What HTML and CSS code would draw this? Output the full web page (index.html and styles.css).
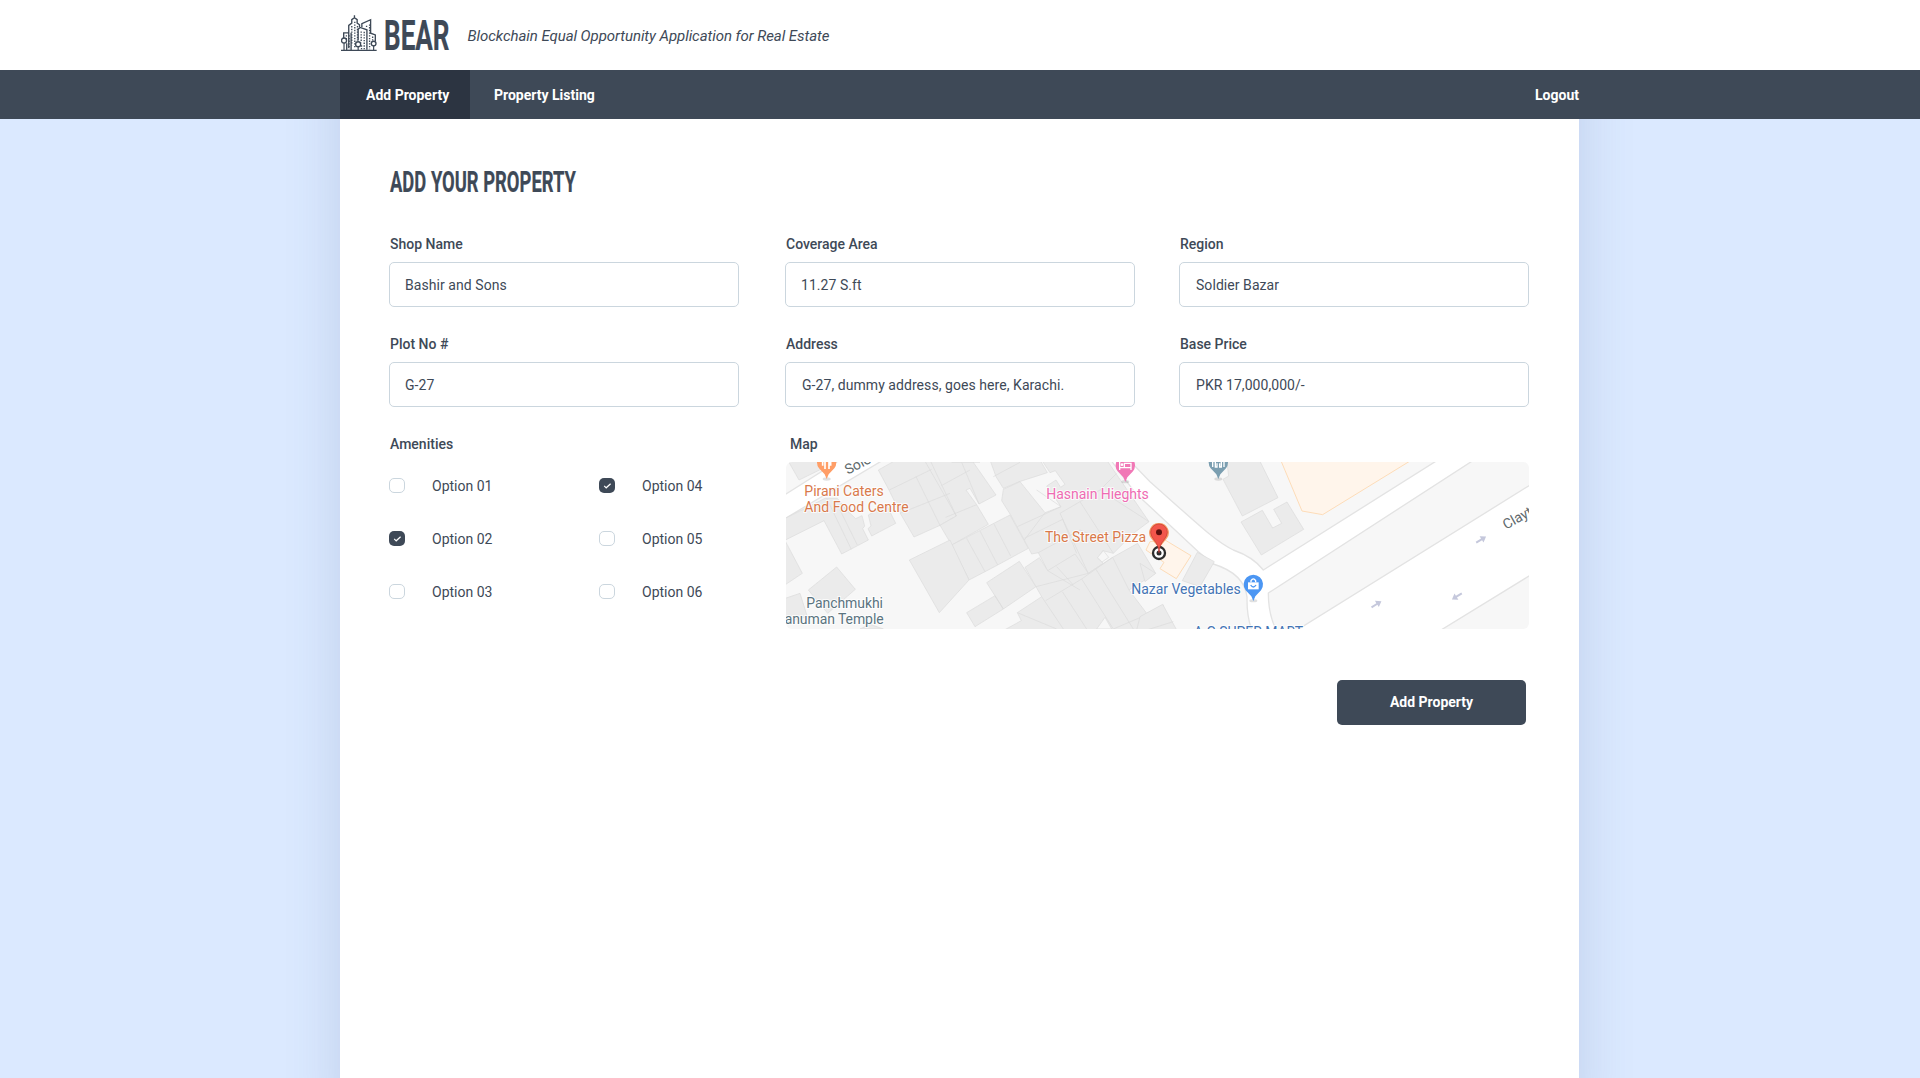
FILE: index.html
```html
<!DOCTYPE html>
<html lang="en">
<head>
<meta charset="utf-8">
<title>BEAR - Add Property</title>
<link rel="stylesheet" href="styles.css">
</head>
<body>
<header class="header">
  <div class="wrap brand">
    <svg class="brand-icon" viewBox="15 14 107 107" fill="none" stroke="#3e4957" stroke-width="4">
      <path d="M15 119H121"/>
      <path d="M24 96V119M66 107V119M112 104V119" stroke-width="3.5"/>
      <circle cx="24" cy="90" r="7.5"/><circle cx="66" cy="101" r="7.5"/><circle cx="112" cy="99" r="7"/>
      <path d="M23 82V67H40M38 112V45L47 38V28L55 22L63 28V38L70 43V50M55 22V15M66 90V56L72 51L92 58V117M77 50V40L103 28V68L117 73V91M32 98V118M45 118V67"/>
      <path d="M47 47V104M56 34V112M64 47V90" stroke-dasharray="4 4"/>
      <path d="M31 74V90M39 74V116M75 63V96M84 64V116M100 42V116M91 46V54M109 78V90M76 104V116" stroke-dasharray="4 4"/>
    </svg>
    <svg class="brand-name" viewBox="0 0 66 34" role="img"><text x="0" y="32" font-size="43.2" textLength="65.5" lengthAdjust="spacingAndGlyphs">BEAR</text></svg>
    <span class="tagline">Blockchain Equal Opportunity Application for Real Estate</span>
  </div>
</header>
<nav class="nav">
  <div class="wrap nav-row">
    <a class="nav-link active">Add Property</a>
    <a class="nav-link">Property Listing</a>
    <a class="nav-link logout">Logout</a>
  </div>
</nav>
<main class="panel">
  <h1 class="title"><svg viewBox="0 0 188 30"><text x="0" y="25" font-size="29.6" textLength="186" lengthAdjust="spacingAndGlyphs">ADD YOUR PROPERTY</text></svg></h1>
  <form class="form">
    <label class="field"><span class="label">Shop Name</span><span class="input">Bashir and Sons</span></label>
    <label class="field"><span class="label">Coverage Area</span><span class="input">11.27 S.ft</span></label>
    <label class="field"><span class="label">Region</span><span class="input wide">Soldier Bazar</span></label>
    <label class="field"><span class="label">Plot No #</span><span class="input">G-27</span></label>
    <label class="field"><span class="label">Address</span><span class="input wide">G-27, dummy address, goes here, Karachi.</span></label>
    <label class="field"><span class="label">Base Price</span><span class="input wide">PKR 17,000,000/-</span></label>
    <div class="field">
      <span class="label">Amenities</span>
      <div class="options">
        <span class="option"><i class="box"></i>Option 01</span>
        <span class="option"><i class="box checked"><svg viewBox="0 0 16 15"><path d="M5.2 7.8l2 2L11.6 5.8"/></svg></i>Option 04</span>
        <span class="option"><i class="box checked"><svg viewBox="0 0 16 15"><path d="M5.2 7.8l2 2L11.6 5.8"/></svg></i>Option 02</span>
        <span class="option"><i class="box"></i>Option 05</span>
        <span class="option"><i class="box"></i>Option 03</span>
        <span class="option"><i class="box"></i>Option 06</span>
      </div>
    </div>
    <div class="field map-field">
      <span class="label map-label">Map</span>
      <svg class="map" viewBox="0 0 2229 501">
        <rect width="2229" height="501" fill="#fff"/>
        <!-- city blocks -->
        <g fill="#f7f7f7" stroke="#e3e3e3" stroke-width="4" stroke-linejoin="round">
          <path d="M-5 -5H160L-5 99Z"/>
          <path d="M-5 171L290 -5H975L1047 92L1237 269L1282 306Q1375 335 1383 405Q1382 465 1398 506H-5Z"/>
          <path d="M1030 -5L1092 59C1240 190 1290 240 1342 264Q1402 285 1432 324L1954 -5Z"/>
          <path d="M2062 -5L1447 393Q1447 460 1472 506H1530L2234 68V-5Z"/>
          <path d="M1962 506L2234 339V506Z"/>
        </g>
        <!-- buildings, west half -->
        <g transform="translate(-18 -96)" fill="#ebebeb" stroke="#dbdbdb" stroke-width="2">
          <path d="M23 90L57 150L135 112L125 90Z"/>
          <path d="M10 268L135 205L172 205L200 240L227 266L246 257L254 288L248 296L265 330L185 372L132 272L10 333Z"/>
          <path d="M265 255L320 225L347 280L275 318L264 296L273 288Z"/>
          <path d="M10 322L67 430L10 468ZM85 480L170 411L226 478L143 550ZM10 507L60 490L82 560L10 580ZM240 597L270 583L310 597Z"/>
          <path d="M295 120L345 92H440L484 167L529 258L480 286L402 321L362 252L328 182Z"/>
          <path d="M433 90H575L648 195L597 222L570 175L558 180L590 224L625 283L515 345L480 286L529 258Z"/>
          <path d="M515 345L690 255L745 355L653 405L615 425L567 450Z"/>
          <path d="M388 390L510 330L567 450L478 548Z"/>
          <path d="M630 90H780L802 128L718 155L670 175L648 140Z"/>
          <path d="M670 178L720 155L795 248L843 230L800 168L828 150L842 172L855 163L826 122L810 128L785 90H980L1107 275L1060 310L1000 370L968 362L953 385L970 400L925 430L803 422L775 368L755 372L733 330L692 255L665 212Z"/>
          <path d="M620 458L718 394L768 470L670 537ZM560 548L645 497L670 537L585 590Z"/>
          <path d="M735 412L778 383L803 422L885 372L925 430L998 382L1073 340L1127 430L1047 480L1100 550L1150 525V610H655L724 572L712 548L785 500Z"/>
          <path d="M970 362L986 382L966 396L953 382Z" fill="#f7f7f7"/>
          <path d="M975 562L995 597H950Z" fill="#f7f7f7"/>
          <path fill="none" d="M180 240L232 345M140 205L214 358M328 180L455 118M360 250L510 190M408 140L480 286M484 167L570 120M497 262L590 224M450 90L529 258M545 97L597 222M640 140L720 97M515 97L600 97M560 325L615 425M600 303L653 405M642 282L692 378M712 290L843 230L770 180M795 248L733 330M733 325L848 268M840 250L960 180L1010 130M960 180L1107 275M840 250L925 430M900 215L1000 370M848 268L890 370M775 368L900 300L985 335M803 422L900 480M830 410L880 465M768 470L925 430M797 512L905 447L998 382M847 485L920 597M905 447L1000 597M948 418L1060 597M998 382L1047 480M785 500L850 597M712 548L830 597M1000 597L1110 550"/>
        </g>
        <!-- buildings, east half -->
        <g transform="translate(1092 -96)" fill="#ebebeb" stroke="#dbdbdb" stroke-width="2">
          <path d="M230 90H328L384 203L277 258L219 148L236 138Z"/>
          <path d="M273 276L337 241L368 294L395 280L371 238L411 216L461 298L334 375Z"/>
          <path d="M142 367L193 395L150 470L97 452Z"/>
          <path d="M-30 560L38 523L80 600H-40ZM-10 600L70 575M-30 400L17 430L-15 455Z"/>
          <g fill="#fff5eb" stroke="#fddcb8" stroke-width="3">
            <path d="M392 90L456 243L518 254L785 90Z"/>
            <path d="M45 330L123 377L79 446L30 416L42 397L-12 360L0 335Z"/>
          </g>
        </g>
        <!-- one-way arrows -->
        <g fill="#c5c8dc">
          <path transform="translate(2085 233) rotate(-32)" d="M-17 -3H2V-11L18 0L2 11V3H-17Z"/>
          <path transform="translate(1771 427) rotate(-32)" d="M-17 -3H2V-11L18 0L2 11V3H-17Z"/>
          <path transform="translate(2013 403) rotate(148)" d="M-17 -3H2V-11L18 0L2 11V3H-17Z"/>
        </g>
        <!-- place names -->
        <g class="map-text">
          <text class="food" x="55" y="102" textLength="238">Pirani Caters</text>
          <text class="food" x="55" y="150" textLength="313">And Food Centre</text>
          <text class="food" x="777" y="240" textLength="303">The Street Pizza</text>
          <text class="hotel" x="781" y="111" textLength="307">Hasnain Hieghts</text>
          <text class="shop" x="1036" y="396" textLength="328">Nazar Vegetables</text>
          <text class="shop" x="1223" y="524" textLength="328">A.G SUPER MART</text>
          <text class="temple" x="61" y="438" textLength="230">Panchmukhi</text>
          <text class="temple" x="-4" y="486" textLength="297">anuman Temple</text>
          <text class="street" transform="translate(185 38) rotate(-27)">Sole</text>
          <text class="street" transform="translate(2160 203) rotate(-29)">Clayt</text>
        </g>
        <!-- pins -->
        <g>
          <g fill="#000" opacity=".12"><ellipse cx="122" cy="51" rx="12" ry="5"/><ellipse cx="1018" cy="59" rx="12" ry="5"/><ellipse cx="1297" cy="51" rx="12" ry="5"/><ellipse cx="1402" cy="416" rx="12" ry="5"/></g>
          <g transform="translate(122 1)"><path fill="#ff9e67" d="M0 50L-6 36L-23 18A29 29 0 1 1 23 18L6 36Z"/><path d="M-12 -10V10M-5 -10V20M7 -10V20M12 -10V10" stroke="#fff" stroke-width="5" fill="none"/></g>
          <g transform="translate(1018 10)"><path fill="#f178b6" d="M0 50L-6 36L-23 18A29 29 0 1 1 23 18L6 36Z"/><path d="M-17 -14V14M-17 7H17V14M17 7V-6H-3V7" stroke="#fff" stroke-width="4" fill="none"/><circle cx="-10" cy="-2" r="4" fill="#fff"/></g>
          <g transform="translate(1297 1)"><path fill="#7b9eb0" d="M0 50L-6 36L-23 18A29 29 0 1 1 23 18L6 36Z"/><path d="M-17 -10V14M17 -10V14M-9 -10V14H-4V3M9 -10V14H4V3" stroke="#fff" stroke-width="4" fill="none"/></g>
          <g transform="translate(1402 367)"><path fill="#4b96f3" d="M0 50L-6 36L-23 18A29 29 0 1 1 23 18L6 36Z"/><path fill="#fff" d="M-16 -6H16V15H-16Z"/><path d="M-7 -6V-11Q0 -22 7 -11V-6" stroke="#fff" stroke-width="4" fill="none"/><path d="M-8 2Q0 14 8 2" stroke="#4b96f3" stroke-width="4" fill="none"/></g>
          <g transform="translate(1119 212)">
            <circle cy="61" r="18" fill="#fff" stroke="#2d2d2d" stroke-width="7"/><circle cy="61" r="7.5" fill="#2d2d2d"/>
            <path d="M0 -29A29 29 0 0 1 24 17L5 40H-5L-24 17A29 29 0 0 1 0 -29Z" fill="#f69a63"/>
            <path d="M0 60Q-1 38-14 23Q-25 9-25 -1A25 25 0 0 1 25 -1Q25 9 14 23Q1 38 0 60Z" fill="#f2564b" stroke="#c43a33" stroke-width="2"/><circle r="9" cy="-1" fill="#5c100e"/>
          </g>
        </g>
      </svg>
    </div>
  </form>
  <button class="submit">Add Property</button>
</main>
</body>
</html>
```
FILE: styles.css
```css
* { box-sizing: border-box; }

body {
  margin: 0;
  height: 1078px;
  overflow: hidden;
  background: #dbe9ff;
  color: #3e4957;
  font: 14px/20px Roboto, sans-serif;
}

.wrap { width: 1239px; margin: 0 0 0 340px; }

.header { position: relative; z-index: 1; height: 70px; background: #fff; }
.brand { display: flex; align-items: flex-start; }
.brand-icon { width: 36px; height: 36px; margin: 15px 0 0 1px; }
.brand-name { width: 66px; height: 34px; margin: 18px 0 0 7px; overflow: visible; }
.brand-name text, .title text { font-family: Roboto, sans-serif; font-weight: 700; fill: #3e4957; stroke: #3e4957; stroke-width: .2px; }
.tagline { margin: 26px 0 0 17.5px; font-size: 15px; font-style: italic; letter-spacing: -.06px; white-space: nowrap; }

.nav { position: relative; z-index: 1; height: 49px; background: #3e4957; }
.nav-row { display: flex; height: 49px; }
.nav-link { padding: 0 24px; color: #fff; font-weight: 700; line-height: 50px; }
.nav-link.active { width: 130px; padding: 0 0 0 26px; background: #2c3441; }
.nav-link.logout { margin-left: auto; padding: 0; }

/* The panel starts under the header so its side shadow has no visible top end. */
.panel {
  display: flex;
  flex-direction: column;
  width: 1239px;
  height: 1078px;
  margin: -119px 0 0 340px;
  padding: 167px 50px 0 49px;
  background: #fff;
  box-shadow: 0 50px 52px rgba(60, 90, 140, .18);
}

.title { margin: 0 0 0 1px; height: 65px; }
.title svg { display: block; width: 188px; height: 30px; overflow: visible; }

.form {
  display: grid;
  grid-template-columns: 396px 394px 350px;
  row-gap: 25px;
}
.field { display: flex; flex-direction: column; }
.label { height: 30px; padding: 2px 0 0 1px; font-weight: 500; line-height: 20px; }
.input { width: 350px; height: 45px; padding: 0 15px; border: 1px solid #cbd6de; border-radius: 5px; line-height: 45px; letter-spacing: .06px; }
.wide { padding-left: 16px; }

.options { display: grid; grid-template-columns: 210px 1fr; row-gap: 33px; padding-top: 14px; }
.option { display: flex; align-items: center; gap: 27px; height: 20px; }
.box { width: 16px; height: 15px; margin-bottom: 1px; border: 1px solid #cbd6de; border-radius: 5px; }
.box.checked { border: 0; background: #3e4957; }
.box svg { display: block; fill: none; stroke: #fff; stroke-width: 1.2; }

.map-field { grid-column: 2 / 4; }
.map-label { padding-left: 5px; }
.map { display: block; width: 743px; height: 167px; margin-left: 1px; border-radius: 6px; }
.map-text { font-family: Roboto, sans-serif; font-size: 42px; stroke: #fff; stroke-width: 6px; paint-order: stroke; stroke-opacity: .8; }
.food { fill: #d9794b; }
.hotel { fill: #ef6cb3; }
.shop { fill: #4374b5; }
.temple { fill: #5b7480; }
.street { fill: #5d686b; }

.submit {
  align-self: flex-end;
  width: 189px;
  height: 45px;
  margin: 51px 3px 0 0;
  padding: 0 0 2px;
  border: 0;
  border-radius: 5px;
  background: #3e4957;
  color: #fff;
  font: 700 14px/20px Roboto, sans-serif;
}
```
